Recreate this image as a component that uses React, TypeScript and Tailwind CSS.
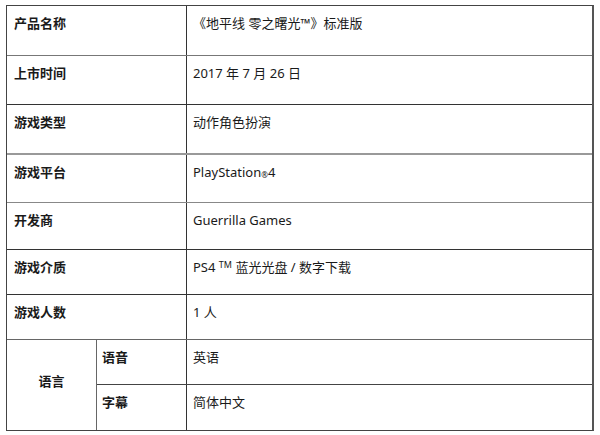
const font = { fontFamily: '"Noto Sans", "Noto Sans CJK SC", sans-serif' };

type Row = { label: string; value: React.ReactNode; h: string; line: string };

const rows: Row[] = [
  { label: "产品名称", value: "《地平线 零之曙光™》标准版", h: "h-[50px]", line: "border-b border-[#777]" },
  { label: "上市时间", value: "2017 年 7 月 26 日", h: "h-[49px]", line: "border-b border-[#333]" },
  { label: "游戏类型", value: "动作角色扮演", h: "h-[50px]", line: "border-b-2 border-[#999]" },
  {
    label: "游戏平台",
    value: (
      <>
        PlayStation<span className="text-[8px] align-[-1px]">®</span>4
      </>
    ),
    h: "h-[48px]",
    line: "border-b border-[#888]",
  },
  { label: "开发商", value: "Guerrilla Games", h: "h-[47px]", line: "border-b border-[#333]" },
  {
    label: "游戏介质",
    value: (
      <>
        PS4 <span className="text-[9px] align-[4px]">TM</span> 蓝光光盘 / 数字下载
      </>
    ),
    h: "h-[45px]",
    line: "border-b border-[#333]",
  },
  { label: "游戏人数", value: "1 人", h: "h-[45px]", line: "border-b border-[#666]" },
];

export default function App() {
  return (
    <div className="w-[600px] h-[435px] bg-white pt-[5px] pl-[6px] text-[13px] text-[#1a1a1a]" style={font}>
      <div className="w-[588px] border border-[#444] border-r-2 border-r-[#555]">
        {rows.map((r) => (
          <div key={r.label} className={`flex ${r.h} ${r.line}`}>
            <div className="w-[180px] shrink-0 border-r border-[#333] pl-[7px] pt-[8px] font-bold">{r.label}</div>
            <div className="flex-1 pl-[6px] pt-[8px]">{r.value}</div>
          </div>
        ))}
        <div className="flex">
          <div className="w-[90px] shrink-0 border-r border-[#666] flex items-center justify-center font-bold pb-[6px]">
            语言
          </div>
          <div className="flex-1">
            <div className="flex h-[45px] border-b border-[#444]">
              <div className="w-[90px] shrink-0 border-r border-[#333] pl-[5px] pt-[8px] font-bold">语音</div>
              <div className="flex-1 pl-[6px] pt-[8px]">英语</div>
            </div>
            <div className="flex h-[45px]">
              <div className="w-[90px] shrink-0 border-r border-[#333] pl-[5px] pt-[8px] font-bold">字幕</div>
              <div className="flex-1 pl-[6px] pt-[8px]">简体中文</div>
            </div>
          </div>
        </div>
      </div>
    </div>
  );
}
